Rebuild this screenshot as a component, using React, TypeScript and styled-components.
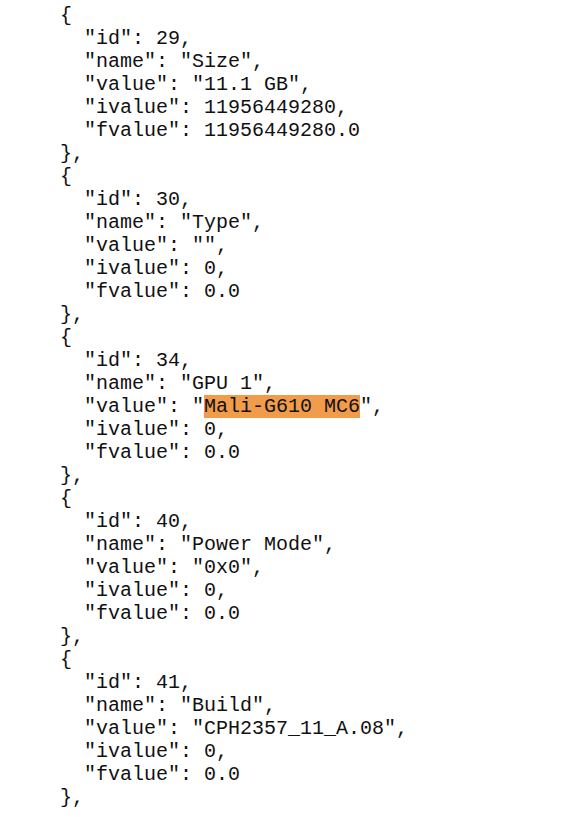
import React from "react";
import styled, { createGlobalStyle } from "styled-components";

const Global = createGlobalStyle`
  html, body { margin: 0; padding: 0; background: #ffffff; }
`;

const Pre = styled.div`
  font-family: "Liberation Mono", "Courier New", monospace;
  font-size: 20px;
  line-height: 23px;
  color: #111111;
  padding: 4px 0 0 60px;
  white-space: pre;
`;

const Line = styled.div<{ $indent?: number }>`
  padding-left: ${(p) => (p.$indent ?? 0) * 24}px;
  height: 23px;
`;

const Mark = styled.span`
  background: #f09c4a;
`;

type Item = {
  id: number;
  name: string;
  value: string;
  ivalue: string;
  fvalue: string;
  highlight?: boolean;
};

const items: Item[] = [
  { id: 29, name: "Size", value: "11.1 GB", ivalue: "11956449280", fvalue: "11956449280.0" },
  { id: 30, name: "Type", value: "", ivalue: "0", fvalue: "0.0" },
  { id: 34, name: "GPU 1", value: "Mali-G610 MC6", ivalue: "0", fvalue: "0.0", highlight: true },
  { id: 40, name: "Power Mode", value: "0x0", ivalue: "0", fvalue: "0.0" },
  { id: 41, name: "Build", value: "CPH2357_11_A.08", ivalue: "0", fvalue: "0.0" },
];

export default function App() {
  return (
    <>
      <Global />
      <Pre>
        {items.map((it) => (
          <React.Fragment key={it.id}>
            <Line>{"{"}</Line>
            <Line $indent={1}>{`"id": ${it.id},`}</Line>
            <Line $indent={1}>{`"name": "${it.name}",`}</Line>
            <Line $indent={1}>
              {`"value": "`}
              {it.highlight ? <Mark>{it.value}</Mark> : it.value}
              {`",`}
            </Line>
            <Line $indent={1}>{`"ivalue": ${it.ivalue},`}</Line>
            <Line $indent={1}>{`"fvalue": ${it.fvalue}`}</Line>
            <Line>{"},"}</Line>
          </React.Fragment>
        ))}
      </Pre>
    </>
  );
}
